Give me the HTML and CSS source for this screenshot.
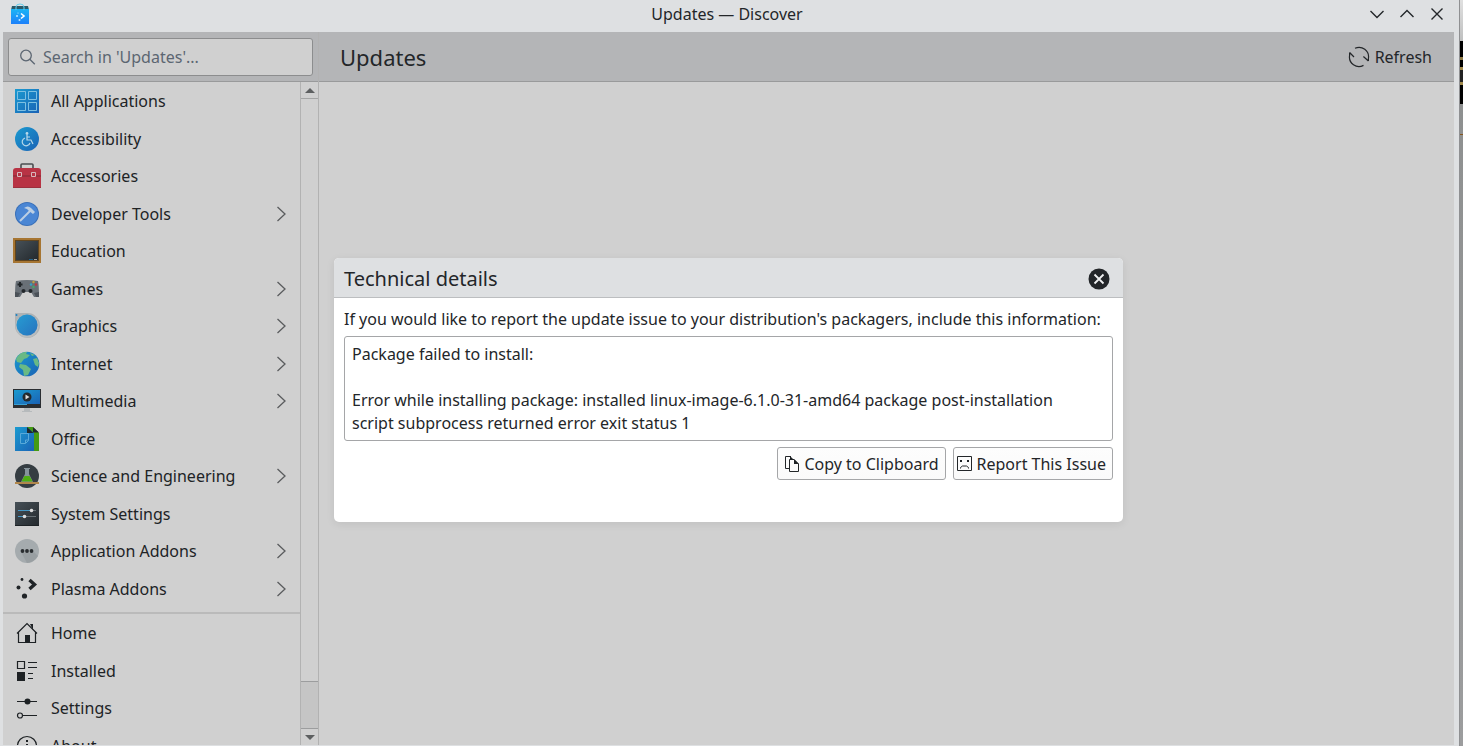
FILE: index.html
```html
<!DOCTYPE html>
<html lang="en">

<head>
    <meta charset="UTF-8">
    <meta name="viewport" content="width=device-width, initial-scale=1.0">
    <title>Updates — Discover</title>
    <link rel="stylesheet" href="styles.css">
</head>

<body>
    <div class="window">
        <header class="titlebar">
            <svg class="app-icon" width="20" height="22" viewBox="0 0 20 22">
                <defs>
                    <linearGradient id="bag" x1="0" y1="0" x2="0" y2="1"><stop offset="0" stop-color="#1bb5f5"/><stop offset="1" stop-color="#1d80fa"/></linearGradient>
                    <linearGradient id="blue" x1="0" y1="0" x2="1" y2="1"><stop offset="0" stop-color="#1b9bd0"/><stop offset="1" stop-color="#1a62b5"/></linearGradient>
                    <linearGradient id="steel" x1="0" y1="0" x2="1" y2="1"><stop offset="0" stop-color="#465057"/><stop offset="1" stop-color="#24292d"/></linearGradient>
                </defs>
                <path fill="#2b5a69" d="M2 3h16l1 4H1z"/>
                <path fill="url(#bag)" d="M1 6h18v15H1z"/>
                <path fill="none" stroke="#69cfec" d="M6 7V4q0-3 4-3t4 3v3"/>
                <path fill="none" stroke="#fff" stroke-width="1.6" d="M11 10.500l3 2.500-3 2.500"/>
                <circle cx="7" cy="13" r="1" fill="#bfe8ff"/><circle cx="9.500" cy="17" r="1" fill="#bfe8ff"/><circle cx="8" cy="10" r=".6" fill="#bfe8ff"/>
            </svg>
            <h1 class="window-title">Updates — Discover</h1>
            <div class="window-buttons">
                <button type="button" aria-label="Minimize"><svg width="14" height="14" viewBox="0 0 14 14"><path d="M.5 4L7 10.500 13.500 4"/></svg></button>
                <button type="button" aria-label="Maximize"><svg width="14" height="14" viewBox="0 0 14 14"><path d="M.5 10L7 3.500 13.500 10"/></svg></button>
                <button type="button" aria-label="Close"><svg width="14" height="14" viewBox="0 0 14 14"><path d="M1.500 1.500l11 11M12.500 1.500l-11 11"/></svg></button>
            </div>
        </header>

        <div class="body">
            <aside class="sidebar">
                <div class="toolbar search-bar">
                    <label class="search">
                        <svg width="16" height="16" viewBox="0 0 16 16"><circle cx="6" cy="6.500" r="5.300"/><path d="M9.800 10.300L14.800 15.300"/></svg>
                        <input type="text" placeholder="Search in 'Updates'..." aria-label="Search">
                    </label>
                </div>
                <div class="sidebar-content">
                    <nav class="menu">
                        <ul class="menu-list categories">
                            <li><a href="#">
                                <svg class="icon" viewBox="0 0 28 28"><path fill="url(#blue)" d="M2 2h24v24H2z"/><path fill="none" stroke="#7ec0e2" d="M4.500 4.500h8v8h-8zM15.500 4.500h8v8h-8zM4.500 15.500h8v8h-8zM15.500 15.500h8v8h-8z"/></svg>
                                <span>All Applications</span></a></li>
                            <li><a href="#">
                                <svg class="icon" viewBox="0 0 28 28"><circle cx="14" cy="14" r="12" fill="url(#blue)"/><g fill="none" stroke="#b9d9ea" stroke-width="1.200"><path d="M14 10v5h4l2 4M14 12h3M12 13a4 4 0 1 0 5 5"/></g><circle cx="14" cy="8.500" r="1.400" fill="#b9d9ea"/></svg>
                                <span>Accessibility</span></a></li>
                            <li><a href="#">
                                <svg class="icon" viewBox="0 0 28 28"><path fill="none" stroke="#4a4d50" stroke-width="1.600" d="M8 7V3q0-1 1-1h10q1 0 1 1v4"/><path fill="#b83344" d="M0 9q0-3 3-3h22q3 0 3 3v17H0z"/><path fill="#9c2f3d" d="M0 13h28v2H0zM0 25h28v1H0z"/><path fill="#b83344" stroke="#d7b9bd" d="M4.500 10.500h4v4h-4zM18.500 10.500h4v4h-4z"/></svg>
                                <span>Accessories</span></a></li>
                            <li><a href="#">
                                <svg class="icon" viewBox="0 0 28 28"><circle cx="14" cy="14" r="12" fill="#3a70b8"/><circle cx="14" cy="14" r="11" fill="#4a86d4"/><path fill="none" stroke="#bccfe3" stroke-width="2" d="M7 21L17 11"/><path fill="#bccfe3" d="M11 8q4-3 7 0l4 4-2 2-4-3-2-2z"/></svg>
                                <span>Developer Tools</span><svg class="chevron" viewBox="0 0 9 16"><path d="M.5 1L8 8 .5 15"/></svg></a></li>
                            <li><a href="#">
                                <svg class="icon" viewBox="0 0 28 28"><path fill="#a67532" d="M0 1h28v25H0z"/><path fill="#60451f" d="M2 3h24v21H2z"/><path fill="url(#steel)" d="M3 4h22v19H3z"/><path fill="#25648b" d="M16 22h4v1h-4z"/><path fill="#a8a8a8" d="M21 22h3v1h-3z"/></svg>
                                <span>Education</span></a></li>
                            <li><a href="#">
                                <svg class="icon" viewBox="0 0 28 28"><path fill="#697077" d="M3 6q11-2 22 0 1 4 1 16h-5l-3-5h-8l-3 5H2Q2 10 3 6z"/><path fill="#4b5158" d="M2 17l5 1-2 4H2zM26 17l-5 1 2 4h3z"/><path stroke="#22272b" stroke-width="2" d="M7 7v5M4.500 9.500h5"/><circle cx="10.500" cy="16" r="2" fill="#22272b"/><circle cx="17.500" cy="16" r="2" fill="#22272b"/><circle cx="20.500" cy="7" r="1.200" fill="#c3a03b"/><circle cx="18" cy="9.500" r="1.200" fill="#35a0c5"/><circle cx="23" cy="9.500" r="1.200" fill="#bc3944"/><circle cx="20.500" cy="12" r="1.200" fill="#45a868"/></svg>
                                <span>Games</span><svg class="chevron" viewBox="0 0 9 16"><path d="M.5 1L8 8 .5 15"/></svg></a></li>
                            <li><a href="#">
                                <svg class="icon" viewBox="0 0 28 28"><path fill="#aeb2b4" d="M2 1h12a12.500 12.500 0 1 1-12 12z"/><circle cx="14" cy="14" r="11.500" fill="#b9bdbf"/><circle cx="14" cy="13" r="10.500" fill="url(#blue)"/><circle cx="14" cy="13" r="10.500" fill="#4aa3dd" opacity=".25"/><circle cx="3.500" cy="3" r="1" fill="#1880c5"/></svg>
                                <span>Graphics</span><svg class="chevron" viewBox="0 0 9 16"><path d="M.5 1L8 8 .5 15"/></svg></a></li>
                            <li><a href="#">
                                <svg class="icon" viewBox="0 0 28 28"><circle cx="14" cy="14" r="12.300" fill="url(#blue)"/><path fill="#69b985" d="M3 9q4-8 11-7l-1 2 4 1-3 3-3 1-3 4-4-1zM7 14l6 1 5 4-3 6-4 1-1-6-4-3zM20 9l4-1 2 5-1 4-3-2zM17 3l5 2-3 1z"/></svg>
                                <span>Internet</span><svg class="chevron" viewBox="0 0 9 16"><path d="M.5 1L8 8 .5 15"/></svg></a></li>
                            <li><a href="#">
                                <svg class="icon" viewBox="0 0 28 28"><path fill="#2a2e32" d="M0 2h28v19H0z"/><path fill="url(#blue)" d="M1 3h26v14H1z"/><path fill="#3a9fd1" d="M1 17h13v1H1z"/><circle cx="14" cy="10" r="4.500" fill="#24292d"/><path fill="#ddd" d="M12.500 7.500l4 2.500-4 2.500z"/><path fill="#b6babc" d="M11 21h6v3h2v1H9v-1h2z"/></svg>
                                <span>Multimedia</span><svg class="chevron" viewBox="0 0 9 16"><path d="M.5 1L8 8 .5 15"/></svg></a></li>
                            <li><a href="#">
                                <svg class="icon" viewBox="0 0 28 28"><path fill="#459b13" d="M14 2h6l6 6v18H14z"/><path fill="#2c770b" d="M14 7h7v19h-7z"/><path fill="#20272b" d="M20 2l6 5.500h-6z"/><path fill="url(#blue)" d="M2 2h12l7 6v18H2z"/><path fill="#20272b" d="M14 2l6.500 6H14z"/><path fill="none" stroke="#58a9d9" d="M7.500 8.500h8v7l-3 3h-5zM15.500 15h-3v3"/></svg>
                                <span>Office</span></a></li>
                            <li><a href="#">
                                <svg class="icon" viewBox="0 0 28 28"><circle cx="14" cy="14" r="12" fill="#353d42"/><path fill="#85939a" d="M11 6h6v1h-1v5l4 8H8l4-8V7h-1z"/><path fill="#4fae11" d="M11.500 14h5l3 5.500h-11z"/><path fill="#b0864b" d="M2 20h24v2H2z"/></svg>
                                <span>Science and Engineering</span><svg class="chevron" viewBox="0 0 9 16"><path d="M.5 1L8 8 .5 15"/></svg></a></li>
                            <li><a href="#">
                                <svg class="icon" viewBox="0 0 28 28"><path fill="url(#steel)" d="M2 2h24v24H2z"/><path fill="#1d2225" d="M2 25h24v1H2z"/><path stroke="#687075" d="M5 10.500h18M5 16.500h18"/><path stroke="#4597c5" d="M5 10.500h13M5 16.500h6"/><circle cx="18.500" cy="10.500" r="1.800" fill="#ddd"/><circle cx="11.500" cy="16.500" r="1.800" fill="#ddd"/></svg>
                                <span>System Settings</span></a></li>
                            <li><a href="#">
                                <svg class="icon" viewBox="0 0 28 28"><circle cx="14" cy="14" r="12" fill="#a5abae"/><path fill="#999fa2" d="M8 15l3 1 3-1 3 1 3-2 5 5q-5 7-11 7z"/><g fill="#292d30"><circle cx="9.500" cy="14" r="1.900"/><circle cx="14" cy="14" r="1.900"/><circle cx="18.500" cy="14" r="1.900"/></g></svg>
                                <span>Application Addons</span><svg class="chevron" viewBox="0 0 9 16"><path d="M.5 1L8 8 .5 15"/></svg></a></li>
                            <li><a href="#">
                                <svg class="icon" viewBox="0 0 28 28"><path fill="none" stroke="#202427" stroke-width="3.400" d="M16.500 5L21.500 9.500 16.500 14"/><g fill="#202427"><circle cx="9" cy="4.500" r="1.400"/><circle cx="5.500" cy="12.500" r="2"/><circle cx="11.500" cy="21" r="2.600"/></g></svg>
                                <span>Plasma Addons</span><svg class="chevron" viewBox="0 0 9 16"><path d="M.5 1L8 8 .5 15"/></svg></a></li>
                        </ul>
                        <ul class="menu-list pages">
                            <li><a href="#">
                                <svg class="icon line" viewBox="0 0 28 28"><path d="M4 14.500L14 4.500 24 14.500M5.500 13v10.500h17V13"/><path class="solid" d="M17 5h3v6zM12 16h5v7h-5z"/></svg>
                                <span>Home</span></a></li>
                            <li><a href="#">
                                <svg class="icon line" viewBox="0 0 28 28"><path d="M4.500 4.500h7v7h-7zM15 5.500h9M15 10.500h9M15 16.500h5M15 21.500h5"/><path class="solid" d="M4 15h8v9H4z"/></svg>
                                <span>Installed</span></a></li>
                            <li><a href="#">
                                <svg class="icon line" viewBox="0 0 28 28"><path d="M4 7.500h20M10 21.500h14"/><circle cx="7" cy="21.500" r="2.500"/><circle class="solid" cx="14.500" cy="7.500" r="3"/></svg>
                                <span>Settings</span></a></li>
                            <li><a href="#">
                                <svg class="icon line" viewBox="0 0 28 28"><circle cx="14" cy="14" r="9.500"/><path class="solid" d="M13 8h2v2h-2zM13 12h2v8h-2z"/></svg>
                                <span>About</span></a></li>
                        </ul>
                    </nav>
                    <div class="scrollbar">
                        <button type="button" aria-label="Scroll up"><svg width="10" height="5" viewBox="0 0 10 5"><path d="M5 0l5 5H0z"/></svg></button>
                        <div class="track"><div class="thumb"></div></div>
                        <button type="button" aria-label="Scroll down"><svg width="10" height="5" viewBox="0 0 10 5"><path d="M0 0h10L5 5z"/></svg></button>
                    </div>
                </div>
            </aside>

            <main class="page">
                <div class="toolbar page-header">
                    <h2>Updates</h2>
                    <button type="button" class="refresh">
                        <svg width="22" height="22" viewBox="0 0 22 22"><path d="M7 2.300A9.500 9.500 0 0 1 20.400 12.500V15M20.400 15l-5-4.500M15.500 19.400A9.500 9.500 0 0 1 1.600 9.500V6.500M1.600 6.500L6 11"/></svg>
                        Refresh
                    </button>
                </div>
            </main>

            <div class="overlay">
                <section class="dialog" role="dialog" aria-labelledby="dialog-title">
                    <div class="dialog-header">
                        <h2 id="dialog-title">Technical details</h2>
                        <button type="button" class="dialog-close" aria-label="Close">
                            <svg width="22" height="22" viewBox="0 0 22 22"><circle cx="11" cy="11" r="10.500"/><path d="M6.500 6.500l9 9M15.500 6.500l-9 9"/></svg>
                        </button>
                    </div>
                    <div class="dialog-content">
                        <label for="details">If you would like to report the update issue to your distribution's packagers, include this information:</label>
                        <textarea id="details" readonly>Package failed to install:

Error while installing package: installed linux-image-6.1.0-31-amd64 package post-installation script subprocess returned error exit status 1</textarea>
                        <div class="actions">
                            <button type="button" class="btn">
                                <svg width="16" height="16" viewBox="0 0 16 16"><path d="M5 12.500H1.500V.5H7M5.500 3.500H10l4.500 4.500v7.500h-9z"/><path class="solid" d="M6 0l4 4H6zM10 3l5 5h-5z"/></svg>
                                Copy to Clipboard
                            </button>
                            <button type="button" class="btn report">
                                <svg width="16" height="16" viewBox="0 0 16 16"><path d="M.5 .5h14v14H.5zM3.500 12.500v-1l2-1.500h4l2 1.500v1"/><path class="solid" d="M3 4h2v2H3zM10 4h2v2h-2z"/></svg>
                                Report This Issue
                            </button>
                        </div>
                    </div>
                </section>
            </div>
        </div>
    </div>
    <div class="desktop">
        <div class="terminal"></div>
        <div class="desktop-rest"></div>
    </div>
</body>

</html>
```

FILE: styles.css
```css
* {
    box-sizing: border-box;
}

body {
    display: flex;
    height: 100vh;
    margin: 0;
    overflow: hidden;
    font-family: "Noto Sans", sans-serif;
    font-size: 16px;
    line-height: 22px;
    color: #232629;
    background: #dee0e2;
}

h1,
h2,
ul {
    margin: 0;
    padding: 0;
    font-weight: normal;
}

button,
input,
textarea {
    font: inherit;
    color: inherit;
}

button {
    padding: 0;
    border: 0;
    background: none;
}

svg {
    flex: none;
    display: block;
}

.window {
    flex: 1;
    display: flex;
    flex-direction: column;
    min-width: 0;
    border-right: 1px solid #8f9092;
}

/* Title bar */
.titlebar {
    display: grid;
    grid-template-columns: 1fr auto 1fr;
    align-items: center;
    height: 32px;
    padding: 0 15px 4px 10px;
    background: #dee0e2;
}

.window-title {
    font-size: 16px;
}

.window-buttons {
    display: flex;
    justify-content: flex-end;
    gap: 16px;
}

.window-buttons path {
    fill: none;
    stroke: #232629;
    stroke-width: 1.4;
}

.body {
    position: relative;
    flex: 1;
    display: flex;
    min-height: 0;
    margin: 0 5px 1px 3px;
    background: #d0d0d0;
}

.toolbar {
    flex: none;
    display: flex;
    align-items: center;
    height: 50px;
    background: #b4b5b7;
    border-bottom: 1px solid #999a9b;
}

/* Sidebar */
.sidebar {
    display: flex;
    flex-direction: column;
    width: 316px;
    border-right: 1px solid #b2b2b2;
}

.search-bar {
    padding: 0 5px;
}

.search {
    flex: 1;
    display: flex;
    align-items: center;
    gap: 7px;
    height: 38px;
    padding: 0 11px;
    border: 1px solid #8c8d8e;
    border-radius: 3px;
    background: #d0d0d0;
}

.search svg {
    fill: none;
    stroke: #5c6672;
    stroke-width: 1.3;
}

.search input {
    flex: 1;
    min-width: 0;
    padding: 0;
    border: 0;
    outline: 0;
    background: none;
}

.search input::placeholder {
    color: #5c6672;
}

.sidebar-content {
    flex: 1;
    display: flex;
    min-height: 0;
}

.menu {
    flex: 1;
    overflow: hidden;
}

.menu-list {
    list-style: none;
}

.menu-list li {
    height: 37px;
}

.menu-list li:nth-child(odd) {
    height: 38px;
}

.menu-list a {
    display: flex;
    align-items: center;
    gap: 10px;
    height: 100%;
    padding: 0 14px 0 10px;
    color: #202326;
    text-decoration: none;
}

.menu-list span {
    flex: 1;
}

.categories {
    padding-bottom: 5px;
    border-bottom: 2px solid #bababa;
}

.icon {
    width: 28px;
    height: 28px;
}

.line {
    fill: none;
    stroke: #1d2124;
    stroke-width: 1.2;
}

.solid {
    fill: #1d2124;
    stroke: none;
}

.chevron {
    width: 9px;
    height: 16px;
    fill: none;
    stroke: #5a5c5e;
    stroke-width: 1.3;
}

.scrollbar {
    display: flex;
    flex-direction: column;
    width: 18px;
    border-left: 1px solid #b2b2b2;
}

.scrollbar button {
    display: flex;
    align-items: center;
    justify-content: center;
    height: 16px;
}

.scrollbar path {
    fill: #5d5f60;
}

.track {
    flex: 1;
    display: flex;
    flex-direction: column;
    justify-content: flex-end;
    border-top: 1px solid #a3a4a4;
}

.thumb {
    height: 48px;
    border: 1px solid #9c9d9e;
    border-width: 1px 0;
    background: #c5c5c5;
}

/* Page */
.page {
    flex: 1;
}

.page-header {
    justify-content: space-between;
    padding: 1px 22px 0 21px;
}

.page-header h2 {
    font-size: 22px;
    line-height: 28px;
}

.refresh {
    display: flex;
    align-items: center;
    gap: 5px;
}

.refresh svg {
    fill: none;
    stroke: #232629;
    stroke-width: 1.2;
}

/* Dialog */
.overlay {
    position: absolute;
    inset: 0;
    display: flex;
    align-items: center;
    justify-content: center;
    padding-top: 3px;
}

.dialog {
    width: 789px;
    max-width: 100%;
    border-radius: 5px;
    background: #fff;
    box-shadow: 0 2px 8px rgba(0, 0, 0, 0.08);
}

.dialog-header {
    display: flex;
    align-items: center;
    justify-content: space-between;
    height: 40px;
    padding: 2px 13px 0 10px;
    border-bottom: 1px solid #bcbec0;
    border-radius: 5px 5px 0 0;
    background: #dee0e2;
}

.dialog-header h2 {
    font-size: 20px;
    line-height: 28px;
}

.dialog-close circle {
    fill: #232629;
}

.dialog-close path {
    stroke: #eff0f1;
    stroke-width: 1.8;
}

.dialog-content {
    display: flex;
    flex-direction: column;
    padding: 10px 10px 42px;
}

.dialog-content textarea {
    height: 105px;
    margin: 6px 0;
    padding: 6px 20px 6px 7px;
    border: 1px solid #a5a6a8;
    border-radius: 3px;
    outline: 0;
    resize: none;
    overflow: hidden;
    line-height: 23px;
    background: #fff;
}

.actions {
    display: flex;
    justify-content: flex-end;
    gap: 7px;
}

.btn {
    display: flex;
    align-items: center;
    gap: 4px;
    height: 33px;
    padding: 0 6px;
    border: 1px solid #a5a6a8;
    border-radius: 3px;
    background: linear-gradient(#fdfdfd, #fafafa);
}

.report {
    padding-left: 3px;
}

.btn svg {
    fill: none;
    stroke: #232629;
}

/* Strip of the desktop behind the window */
.desktop {
    display: flex;
    flex-direction: column;
    width: 3px;
    padding-top: 41px;
    background: linear-gradient(#e0e0e0, #8e9090 100px, #9c9d9e);
}

.terminal {
    height: 63px;
    background: linear-gradient(#000 16px, #8e7a45 16px, #8e7a45 19px, #000 19px, #000 26px, #a18a4c 26px, #a18a4c 29px, #222 29px, #222 41px, #a18a4c 41px, #a18a4c 44px, #000 44px);
}

.desktop-rest {
    height: 31px;
    border-bottom: 1px solid #85561f;
}
```
